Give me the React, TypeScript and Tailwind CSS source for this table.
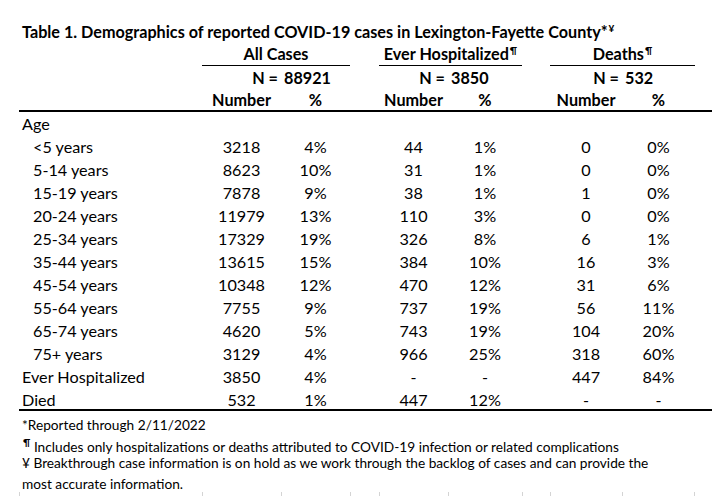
import React from "react";

const cols =
    "grid grid-cols-[183px_79px_69px_29px_69px_74px_28px_72px_73px]";

const ages: string[][] = [
    ["<5 years", "3218", "4%", "44", "1%", "0", "0%"],
    ["5-14 years", "8623", "10%", "31", "1%", "0", "0%"],
    ["15-19 years", "7878", "9%", "38", "1%", "1", "0%"],
    ["20-24 years", "11979", "13%", "110", "3%", "0", "0%"],
    ["25-34 years", "17329", "19%", "326", "8%", "6", "1%"],
    ["35-44 years", "13615", "15%", "384", "10%", "16", "3%"],
    ["45-54 years", "10348", "12%", "470", "12%", "31", "6%"],
    ["55-64 years", "7755", "9%", "737", "19%", "56", "11%"],
    ["65-74 years", "4620", "5%", "743", "19%", "104", "20%"],
    ["75+ years", "3129", "4%", "966", "25%", "318", "60%"],
];

const totals: string[][] = [
    ["Ever Hospitalized", "3850", "4%", "-", "-", "447", "84%"],
    ["Died", "532", "1%", "447", "12%", "-", "-"],
];

function DataRow({ row, indent, last }: { row: string[]; indent?: boolean; last?: boolean }) {
    const [label, n1, p1, n2, p2, n3, p3] = row;
    return (
        <div className={`${cols} h-[23px] leading-[23px] ${last ? "border-b-2 border-black" : ""}`}>
            <div className={indent ? "pl-[14px]" : "pl-[3px]"}>{label}</div>
            <div className="text-center">{n1}</div>
            <div className="text-center">{p1}</div>
            <div />
            <div className="text-center">{n2}</div>
            <div className="text-center">{p2}</div>
            <div />
            <div className="text-center">{n3}</div>
            <div className="text-center">{p3}</div>
        </div>
    );
}

const Sup = ({ children }: { children: React.ReactNode }) => (
    <span className="relative -top-[6px] ml-px align-baseline text-[10px] leading-none font-bold">{children}</span>
);

export default function App() {
    return (
        <div
            className="h-[496px] w-[712px] overflow-hidden bg-white pt-[19px] pl-[19px] text-[16.2px] text-black"
            style={{ fontFamily: "Lato, 'Liberation Sans', sans-serif" }}
        >
            <div className="h-[23px] pt-px pl-[3px] leading-[23px] font-bold whitespace-nowrap">
                Table 1. Demographics of reported COVID-19 cases in Lexington-Fayette County*
                <Sup>¥</Sup>
            </div>

            <div className={`${cols} h-[24px] leading-[23px] font-bold`}>
                <div />
                <div className="col-span-2 border-b border-black text-center">All Cases</div>
                <div />
                <div className="col-span-2 border-b border-black text-center whitespace-nowrap">
                    Ever Hospitalized<Sup>¶</Sup>
                </div>
                <div />
                <div className="col-span-2 border-b border-black text-center">
                    Deaths<Sup>¶</Sup>
                </div>
            </div>

            <div className={`${cols} h-[23px] leading-[23px] font-bold`}>
                <div />
                <div className="pr-[3px] text-right">N =</div>
                <div className="pl-[3px]">88921</div>
                <div />
                <div className="pr-[3px] text-right">N =</div>
                <div className="pl-[3px]">3850</div>
                <div />
                <div className="pr-[3px] text-right">N =</div>
                <div className="pl-[3px]">532</div>
            </div>

            <div className={`${cols} h-[23px] border-b-2 border-black leading-[21px] font-bold`}>
                <div />
                <div className="text-center">Number</div>
                <div className="text-center">%</div>
                <div />
                <div className="text-center">Number</div>
                <div className="text-center">%</div>
                <div />
                <div className="text-center">Number</div>
                <div className="text-center">%</div>
            </div>

            <div className="h-[23px] pl-[3px] leading-[23px]">Age</div>
            {ages.map((r) => (
                <DataRow key={r[0]} row={r} indent />
            ))}
            {totals.map((r, i) => (
                <DataRow key={r[0]} row={r} last={i === totals.length - 1} />
            ))}

            <div className="w-[676px] pl-[3px] text-[13.7px] whitespace-nowrap">
                <div className="h-[23px] pt-[2px] leading-[23px]">*Reported through 2/11/2022</div>
                <div className="h-[16px] pt-px leading-[23px]">
                    <Sup>¶</Sup> Includes only hospitalizations or deaths attributed to COVID-19 infection or related complications
                </div>
                <div className="h-[21px] pt-px leading-[23px]">
                    ¥ Breakthrough case information is on hold as we work through the backlog of cases and can provide the
                </div>
                <div className="h-[21px] pt-px leading-[23px]">most accurate information.</div>
            </div>

            <div className={`${cols} h-[6px]`}>
                <div className="border-l border-[#d4d4d4]" />
                <div className="border-l border-[#d4d4d4]" />
                <div className="border-l border-[#d4d4d4]" />
                <div className="border-l border-[#d4d4d4]" />
                <div className="border-l border-[#d4d4d4]" />
                <div className="border-l border-[#d4d4d4]" />
                <div className="border-l border-[#d4d4d4]" />
                <div className="border-l border-[#d4d4d4]" />
                <div className="border-x border-[#d4d4d4]" />
            </div>
        </div>
    );
}
